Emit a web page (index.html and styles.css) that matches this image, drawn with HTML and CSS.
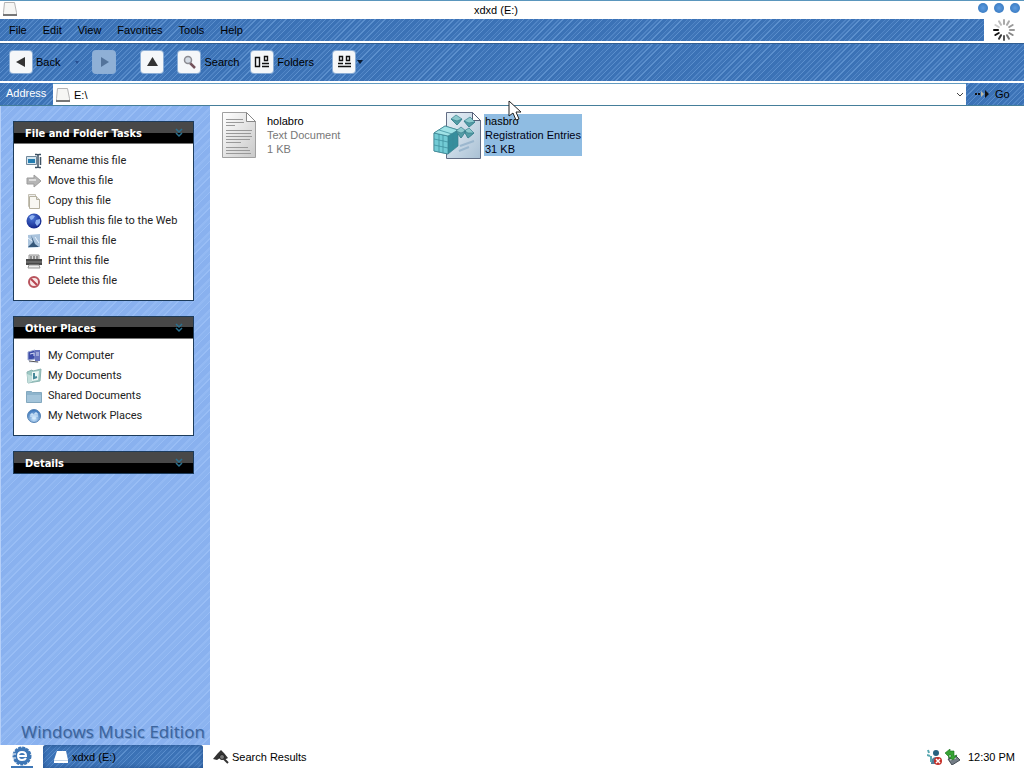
FILE: index.html
```html
<!DOCTYPE html>
<html lang="en">
<head>
<meta charset="utf-8">
<title>xdxd (E:)</title>
<link rel="stylesheet" href="styles.css">
</head>
<body>
<svg class="defs" aria-hidden="true">
  <defs>
    <linearGradient id="paper" x1="0" y1="0" x2="1" y2="1"><stop offset="0" stop-color="#fff"/><stop offset="1" stop-color="#c9c9c9"/></linearGradient>
    <linearGradient id="blue-paper" x1="0" y1="0" x2="1" y2="1"><stop offset="0" stop-color="#eaf2f8"/><stop offset="1" stop-color="#a9c0d4"/></linearGradient>
    <radialGradient id="globe" cx=".4" cy=".3" r=".8"><stop offset="0" stop-color="#4a76d8"/><stop offset="1" stop-color="#0c1c80"/></radialGradient>
    <radialGradient id="net" cx=".5" cy=".7" r=".7"><stop offset="0" stop-color="#d3ecff"/><stop offset="1" stop-color="#2b69b4"/></radialGradient>
    <symbol id="drive" viewBox="0 0 16 16"><path d="M2.500 1.500h10l2 10v3h-13v-3z" fill="#f6f6f4" stroke="#b5b5b5"/><path d="M1 14h14" stroke="#777" stroke-width="2"/></symbol>
    <symbol id="chevrons" viewBox="0 0 10 10"><path d="M2 1l3 3 3-3M2 5l3 3 3-3" fill="none" stroke="#2b7190" stroke-width="1.500"/></symbol>
  </defs>
</svg>

<header class="titlebar">
  <svg class="i16"><use href="#drive"/></svg>
  <h1>xdxd (E:)</h1>
  <div class="window-buttons">
    <button aria-label="Minimize"></button><button aria-label="Maximize"></button><button aria-label="Close"></button>
  </div>
</header>

<div class="menu-row">
  <nav class="menu stripes">
    <button>File</button><button>Edit</button><button>View</button><button>Favorites</button><button>Tools</button><button>Help</button>
  </nav>
  <div class="throbber">
    <svg width="24" height="24" viewBox="-12 -12 24 24" stroke-width="2" stroke-linecap="round">
      <path d="M0-6v-4" stroke="#aaa"/><path d="M0-6v-4" stroke="#aaa" transform="rotate(30)"/><path d="M0-6v-4" stroke="#999" transform="rotate(60)"/><path d="M0-6v-4" stroke="#999" transform="rotate(90)"/><path d="M0-6v-4" stroke="#888" transform="rotate(120)"/><path d="M0-6v-4" stroke="#777" transform="rotate(150)"/><path d="M0-6v-4" stroke="#555" transform="rotate(180)"/><path d="M0-6v-4" stroke="#333" transform="rotate(210)"/><path d="M0-6v-4" stroke="#111" transform="rotate(240)"/><path d="M0-6v-4" stroke="#111" transform="rotate(270)"/><path d="M0-6v-4" stroke="#ccc" transform="rotate(300)"/><path d="M0-6v-4" stroke="#bbb" transform="rotate(330)"/>
    </svg>
  </div>
</div>

<div class="toolbar stripes">
  <button class="tool back"><span class="tile"><svg viewBox="0 0 22 22"><path d="M15 6v10l-9-5z" fill="#333"/></svg></span>Back
    <svg class="hint" viewBox="0 0 8 6"><path d="M2 2h4L4 5z" fill="#284f91"/></svg></button>
  <button class="tool forward" aria-label="Forward" disabled><span class="tile"><svg viewBox="0 0 22 22"><path d="M8 6v10l8-5z" fill="#53739b"/></svg></span></button>
  <button class="tool up" aria-label="Up"><span class="tile"><svg viewBox="0 0 22 22"><path d="M6 15h11l-5.500-9z" fill="#333"/></svg></span></button>
  <button class="tool search"><span class="tile"><svg viewBox="0 0 22 22"><path d="M12 12l5 5" stroke="#73525b" stroke-width="2.500"/><circle cx="10" cy="9" r="3.500" fill="#d5dce5" stroke="#8b8b91" stroke-width="1.500"/></svg></span>Search</button>
  <button class="tool folders"><span class="tile"><svg viewBox="0 0 22 22" fill="none" stroke="#111" stroke-width="1.400"><path d="M4.500 6.500h4v9h-4zM13.500 5.500h3v4h-3zM11 12.500h7M11 15.500h7"/></svg></span>Folders</button>
  <button class="tool views" aria-label="Views"><span class="tile"><svg viewBox="0 0 22 22" fill="none" stroke="#111" stroke-width="1.400"><path d="M6.500 5.500h3v4h-3zM13.500 5.500h3v4h-3zM5 12.500h5M12 12.500h6M5 15.500h13"/></svg></span>
    <svg class="caret" viewBox="0 0 6 4"><path d="M0 0h6L3 4z" fill="#0a1a30"/></svg></button>
</div>

<form class="address stripes">
  <label for="path">Address</label>
  <div class="combo">
    <svg class="i16"><use href="#drive"/></svg>
    <input id="path" type="text" value="E:\">
    <button type="button" aria-label="Show history"><svg width="8" height="6" viewBox="0 0 8 6"><path d="M1 1l3 3 3-3" fill="none" stroke="#444"/></svg></button>
  </div>
  <button class="go" type="button"><svg width="15" height="10" viewBox="0 0 15 10"><path d="M0 5h2M3 5h2" stroke="#111" stroke-width="2"/><path d="M6 2l3 3-3 3z" fill="#bcb9a5"/><path d="M10 1l4 4-4 4z" fill="#111"/></svg>Go</button>
</form>

<div class="content">
  <aside class="sidebar">
    <section class="panel">
      <h2><button>File and Folder Tasks<svg><use href="#chevrons"/></svg></button></h2>
      <ul>
        <li><a href="#"><svg class="i16" viewBox="0 0 16 16"><path d="M.5 3.500h10v8H.5z" fill="#d5e6f0" stroke="#71879a"/><path d="M2 6h7v4H2z" fill="#247db0"/><path d="M9 1.500h2q1 0 1 1 0-1 1-1h2M12 2v12M9 14.500h2q1 0 1-1 0 1 1 1h2M14.500 4v8" fill="none" stroke="#3d5163" stroke-width="1.500"/></svg>Rename this file</a></li>
        <li><a href="#"><svg class="i16" viewBox="0 0 16 16"><path d="M1 5h7V2l7 6-7 6v-3H1z" fill="#b5b5b5" stroke="#9d9d9d"/><path d="M3 7h7" stroke="#ddd" stroke-width="2"/></svg>Move this file</a></li>
        <li><a href="#"><svg class="i16" viewBox="0 0 16 16"><path d="M2.500 1.500h7v12h-7z" fill="#eee" stroke="#c5c1b4"/><path d="M3.500 3.500h7l3 3v9h-10z" fill="#f8f7f2" stroke="#b5b09f"/><path d="M10.500 3.500v3h3" fill="#ddd" stroke="#b5b09f"/></svg>Copy this file</a></li>
        <li><a href="#"><svg class="i16" viewBox="0 0 16 16"><circle cx="8" cy="8" r="7.500" fill="url(#globe)"/><path d="M3 4l3-2 3 1-2 3-2 1M10 7l4-1v4l-3 3-2-3z" fill="#8fb2f0"/></svg>Publish this file to the Web</a></li>
        <li><a href="#"><svg class="i16" viewBox="0 0 16 16"><path d="M2 2l12-1v13L2 15z" fill="#abc4dd"/><path d="M5 2l2 7-5 5h11l-4-3z" fill="#36587a"/><path d="M9 4l4 6M2 5l4 3" stroke="#e8f3ff"/></svg>E-mail this file</a></li>
        <li><a href="#"><svg class="i16" viewBox="0 0 16 16"><path d="M3 2h10v5H3z" fill="#ddd" stroke="#999"/><path d="M0 6h16v6H0z" fill="#494949"/><path d="M0 9h16" stroke="#888"/><path d="M3 12h10l1 3H2z" fill="#eee" stroke="#999"/><path d="M5 3v3M8 3v3M11 3v3" stroke="#444"/></svg>Print this file</a></li>
        <li><a href="#"><svg class="i16" viewBox="0 0 16 16"><circle cx="8" cy="9" r="5" fill="#f9e9e9" stroke="#b8545d" stroke-width="2"/><path d="M5 6l6 6" stroke="#b84450" stroke-width="2"/></svg>Delete this file</a></li>
      </ul>
    </section>
    <section class="panel">
      <h2><button>Other Places<svg><use href="#chevrons"/></svg></button></h2>
      <ul>
        <li><a href="#"><svg class="i16" viewBox="0 0 16 16"><path d="M2 4l7-2v9l-7 1z" fill="#3c4ca8" stroke="#99a6d2"/><path d="M9 2h5v11H9z" fill="#6673bd"/><path d="M4 6l4-1v3M10 5h3M10 7h3M3 14h10" stroke="#d4dcf5" fill="none"/><path d="M3 13l9 1" stroke="#555"/></svg>My Computer</a></li>
        <li><a href="#"><svg class="i16" viewBox="0 0 16 16"><path d="M1 4l5-2 1 1 8-2-1 12-12 2z" fill="#9dc8c4" stroke="#8ab3b1"/><path d="M6 4l7-1-1 9-6 1z" fill="#edf7f5"/><path d="M8 5v5l3-1" fill="none" stroke="#45899a" stroke-width="2"/><path d="M1 6l5 2v6l-4 1z" fill="#c3dfdc"/></svg>My Documents</a></li>
        <li><a href="#"><svg class="i16" viewBox="0 0 16 16"><path d="M.5 3.500h5l1 1h9v10H.5z" fill="#8eb4cc" stroke="#83a8bf"/><path d="M1 7h14v7H1z" fill="#a3c4da"/></svg>Shared Documents</a></li>
        <li><a href="#"><svg class="i16" viewBox="0 0 16 16"><circle cx="8" cy="8" r="6.500" fill="url(#net)" stroke="#5684b5"/><path d="M5 9V6h2v5M9 11V5h2v4" fill="none" stroke="#dff1ff"/></svg>My Network Places</a></li>
      </ul>
    </section>
    <section class="panel">
      <h2><button>Details<svg><use href="#chevrons"/></svg></button></h2>
    </section>
    <p class="edition">Windows Music Edition</p>
  </aside>

  <main class="files">
    <a class="file" href="#">
      <svg width="48" height="48" viewBox="0 0 48 48"><path d="M7.500 1.500h24l9 9v36h-33z" fill="url(#paper)" stroke="#a0a0a0"/><path d="M31.500 1.500v9h9z" fill="#fff" stroke="#888"/><path d="M11 8.500h17M11 11.500h18M11 14.500h9M11 19.500h26M11 22.500h25M11 25.500h26M11 28.500h24M11 31.500h15M11 36.500h22M11 39.500h24M11 42.500h25" stroke="#999"/></svg>
      <span class="label"><b>holabro</b><span>Text Document</span><span>1 KB</span></span>
    </a>
    <a class="file selected" href="#">
      <svg width="48" height="48" viewBox="0 0 48 48"><path d="M13.500 1.500h26l8 8v38h-34z" fill="url(#blue-paper)" stroke="#626d84"/><path d="M39.500 1.500v8h8z" fill="#fff" stroke="#566078"/><path d="M27 35l14-5M26 40l10-4" stroke="#9bb7ce" stroke-width="2"/>
      <g stroke="#397f8e" stroke-width=".7"><path d="M1 22l11-7 13 4v16l-10 8-14-3z" fill="#358e9d"/><path d="M1 22l14 3v18L1 40z" fill="#72cbd5"/><path d="M1 22l11-7 13 4-10 6z" fill="#9fe2e6"/><path d="M6 23v18M10 24v18M1 28l14 3 10-6M1 34l14 3 10-6M20 22v17M6 19l13 4" fill="none" stroke="#3a8a99"/>
      <path d="M18 8l5-4 6 4-5 6zM31 10l6-4 5 5-6 5zM23 20l5-4 5 4-5 7zM31 20l5-3 5 5-6 5z" fill="#8cc9cd"/><path d="M18 8l6 2 5-2-5 6zM31 10l5 2 6-1-6 5zM23 20l5 2 5-2-5 7zM31 20l4 2h6l-6 5z" fill="#539da6"/></g></svg>
      <span class="label"><b>hasbro</b><span>Registration Entries</span><span>31 KB</span></span>
      <svg class="pointer" width="14" height="21" viewBox="0 0 14 21"><path d="M1 1v15l4-3 3 7 3-1-3-7h5z" fill="#fff" stroke="#222"/></svg>
    </a>
  </main>
</div>

<footer class="taskbar">
  <button class="start" aria-label="Start"><svg width="22" height="22" viewBox="0 0 22 22"><circle cx="11" cy="10" r="8.500" fill="#3e77b6" stroke="#3e77b6" stroke-width="2" stroke-dasharray="3 1"/><path d="M8 10h7q0-4-4-4t-4 4q0 4 4 4 3 0 4-2" fill="none" stroke="#fff" stroke-width="2"/><path d="M1 12h4M2 8h3" stroke="#fff"/><path d="M0 21h22" stroke="#3e77b6" stroke-width="2"/></svg></button>
  <button class="task active stripes"><svg class="i16" viewBox="0 0 16 16"><path d="M4 2h9l2 9v3H1v-3z" fill="#fff"/><path d="M1 11.500h14" stroke="#c5d5e5"/></svg>xdxd (E:)</button>
  <button class="task"><svg class="i16" viewBox="0 0 16 16"><path d="M0 10l5-6 3-3 3 3 4 5-4 2-4-2-3 2z" fill="#333"/><circle cx="9" cy="8" r="2.500" fill="#777" stroke="#222"/><path d="M11 10l4 4" stroke="#333" stroke-width="2"/></svg>Search Results</button>
  <div class="tray">
    <svg class="i16" viewBox="0 0 16 16"><circle cx="9" cy="4" r="3" fill="#27617f"/><path d="M4 15q0-7 5-7t5 7z" fill="#527e98"/><path d="M1 1l1 3M0 6l3 1M4 7v6" stroke="#58a7b0" stroke-width="2"/><circle cx="11" cy="12" r="4" fill="#c52f28"/><path d="M9 10l4 4M13 10l-4 4" stroke="#fff" stroke-width="1.500"/></svg>
    <svg class="i16" viewBox="0 0 16 16"><path d="M4 10l8-3 4 4-8 5z" fill="#747d86" stroke="#434c54"/><path d="M6 11l6-2" stroke="#ddd"/><path d="M1 4l5-4v2h4v5l3-1-4 5-5-3h3V6H5v2z" fill="#36a333" stroke="#18701e" stroke-width=".6"/></svg>
    <time>12:30 PM</time>
  </div>
</footer>
</body>
</html>
```

FILE: styles.css
```css
* { box-sizing: border-box; }

body {
  margin: 0;
  min-height: 100vh;
  display: flex;
  flex-direction: column;
  background: #fff;
  color: #000;
  font: 11px/14px "Liberation Sans", Arial, sans-serif;
}

button, input { font: inherit; color: inherit; border: 0; background: none; padding: 0; margin: 0; }
a { color: inherit; text-decoration: none; }
h1, h2, p, ul { margin: 0; padding: 0; font: inherit; }
ul { list-style: none; }
svg { flex: none; }

.defs { position: absolute; width: 0; height: 0; }
.i16 { width: 16px; height: 16px; }

.stripes {
  background: repeating-linear-gradient(135deg, #3b72b6 0 3px, #4f84c5 3px 4px, #3f75b8 4px 6px, #5b8fcd 6px 7px);
}

.titlebar {
  display: grid;
  grid-template-columns: 1fr auto 1fr;
  align-items: center;
  height: 19px;
  padding: 0 4px 0 2px;
  border-top: 1px solid #5a96bd;
}
.titlebar .i16 { margin-top: -2px; }
.titlebar h1 { padding-right: 30px; }
.window-buttons { display: flex; justify-content: flex-end; gap: 6px; margin-top: -4px; }
.window-buttons button {
  width: 10px;
  height: 10px;
  border-radius: 50%;
  background: radial-gradient(#5e9ce0, #2e71b9);
}

.menu-row { display: flex; height: 22px; }
.menu { flex: 1; display: flex; align-items: center; gap: 16px; padding-left: 9px; }
.throbber { width: 40px; display: flex; align-items: center; justify-content: center; }

.toolbar {
  display: flex;
  align-items: center;
  height: 38px;
  margin: 2px 0;
  padding: 0 0 2px 10px;
  border-top: 1px solid #315e91;
}
.tool { display: flex; align-items: center; gap: 4px; }
.tile { width: 22px; height: 22px; border-radius: 3px; background: #f5f7f9; box-shadow: 0 0 0 1px #8caed6; }
.tile svg { display: block; width: 22px; height: 22px; }
.hint { width: 8px; height: 6px; margin-left: 9px; }
.caret { width: 6px; height: 4px; }
.forward { margin-left: 12px; }
.forward .tile { background: #8fb0d6; }
.up { margin-left: 26px; }
.search { margin-left: 15px; }
.folders { margin-left: 12px; }
.views { margin-left: 19px; gap: 2px; }

.address { display: flex; height: 23px; border-bottom: 1px solid #457e9a; }
.address label { width: 53px; padding: 3px 0 0 6px; color: #fff; }
.combo { flex: 1; display: flex; align-items: center; gap: 3px; padding: 0 2px; background: #fff; border-top: 1px solid #619ac0; }
.combo input { flex: 1; min-width: 0; outline: 0; }
.combo button { display: flex; }
.go { display: flex; align-items: center; gap: 5px; width: 58px; padding-left: 9px; }

.content { flex: 1; display: flex; }
.sidebar {
  width: 210px;
  display: flex;
  flex-direction: column;
  gap: 15px;
  padding: 15px 5px 2px 13px;
  background: repeating-linear-gradient(135deg, #89b1ef 0 5px, #93b9f3 5px 7px, #8cb4f0 7px 10px, #98bdf5 10px 11px);
  border-left: 1px solid #b5cff8;
}
.panel { width: 181px; margin-left: -1px; background: #fff; border: 1px solid #1d3c5c; font-family: Roboto, sans-serif; }
.panel h2 button {
  display: flex;
  align-items: center;
  justify-content: space-between;
  width: 100%;
  height: 21px;
  padding: 3px 9px 0 11px;
  color: #fff;
  background: linear-gradient(#484848 0 50%, #000 50%);
  font: bold 11px/14px "DejaVu Sans Condensed", "DejaVu Sans", sans-serif;
}
.panel h2 svg { width: 10px; height: 10px; margin-top: -3px; }
.panel ul { padding: 7px 0 9px 12px; border-top: 1px solid #777; }
.panel li a { display: flex; align-items: center; gap: 6px; height: 20px; color: #222; }
.edition { margin-top: auto; text-align: right; white-space: nowrap; color: #3c659f; font: 17px/22px "Noto Sans", sans-serif; text-shadow: 1px 1px #7199d0; }

.files { flex: 1; display: flex; flex-wrap: wrap; align-items: flex-start; align-content: flex-start; padding: 5px; }
.file { position: relative; display: flex; align-items: center; gap: 3px; width: 218px; }
.label { display: flex; flex-direction: column; padding: 0 1px; color: #777; }
.label b { color: #000; font-weight: normal; }
.selected .label { background: #8fbce2; color: #001; }
.pointer { position: absolute; left: 75px; top: -11px; }

.taskbar { display: flex; align-items: center; height: 23px; }
.start { width: 43px; display: flex; justify-content: center; }
.task { display: flex; align-items: center; gap: 3px; height: 23px; padding-left: 10px; }
.task.active { width: 160px; border-radius: 3px 3px 0 0; box-shadow: inset 0 0 5px #244f8b; }
.tray { margin-left: auto; display: flex; align-items: center; gap: 1px; padding-right: 9px; }
.tray time { margin-left: 7px; }
```
